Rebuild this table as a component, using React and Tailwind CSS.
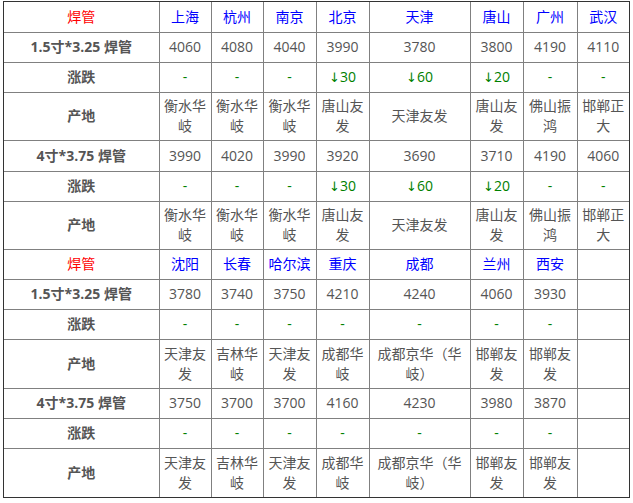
import React from "react";

const cols = ["w-[155px]", "w-[52px]", "w-[52px]", "w-[53px]", "w-[53px]", "w-[101px]", "w-[53px]", "w-[54px]", "w-[52px]"];

const blocks = [
  {
    cities: ["上海", "杭州", "南京", "北京", "天津", "唐山", "广州", "武汉"],
    rows: [
      {
        label: "1.5寸*3.25 焊管",
        prices: ["4060", "4080", "4040", "3990", "3780", "3800", "4190", "4110"],
        change: ["-", "-", "-", "30", "60", "20", "-", "-"],
        origin: ["衡水华岐", "衡水华岐", "衡水华岐", "唐山友发", "天津友发", "唐山友发", "佛山振鸿", "邯郸正大"],
      },
      {
        label: "4寸*3.75 焊管",
        prices: ["3990", "4020", "3990", "3920", "3690", "3710", "4190", "4060"],
        change: ["-", "-", "-", "30", "60", "20", "-", "-"],
        origin: ["衡水华岐", "衡水华岐", "衡水华岐", "唐山友发", "天津友发", "唐山友发", "佛山振鸿", "邯郸正大"],
      },
    ],
    heights: ["h-[30px]", "h-[30px]", "h-[30px]", "h-[48px]", "h-[31px]", "h-[30px]", "h-[48px]"],
  },
  {
    cities: ["沈阳", "长春", "哈尔滨", "重庆", "成都", "兰州", "西安", ""],
    rows: [
      {
        label: "1.5寸*3.25 焊管",
        prices: ["3780", "3740", "3750", "4210", "4240", "4060", "3930", ""],
        change: ["-", "-", "-", "-", "-", "-", "-", ""],
        origin: ["天津友发", "吉林华岐", "天津友发", "成都华岐", "成都京华（华岐）", "邯郸友发", "邯郸友发", ""],
      },
      {
        label: "4寸*3.75 焊管",
        prices: ["3750", "3700", "3700", "4160", "4230", "3980", "3870", ""],
        change: ["-", "-", "-", "-", "-", "-", "-", ""],
        origin: ["天津友发", "吉林华岐", "天津友发", "成都华岐", "成都京华（华岐）", "邯郸友发", "邯郸友发", ""],
      },
    ],
    heights: ["h-[30px]", "h-[30px]", "h-[30px]", "h-[49px]", "h-[30px]", "h-[30px]", "h-[49px]"],
  },
];

const cell = "border border-[#808080] px-1 text-center align-middle";

// 涨跌: "-" stays a dash, numbers get a down arrow
const Change = ({ v }) =>
  v === "-" || v === "" ? (
    v
  ) : (
    <>
      <span className="font-['DejaVu_Sans',sans-serif] text-[13px]">↓</span>
      {v}
    </>
  );

const Block = ({ block }) => {
  const h = block.heights;
  return (
    <>
      <tr className={h[0]}>
        <td className={`${cell} text-[#ff0000]`}>焊管</td>
        {block.cities.map((c, i) => (
          <td key={i} className={`${cell} text-[#0000ff]`}>
            {c}
          </td>
        ))}
      </tr>
      {block.rows.map((r, ri) => (
        <React.Fragment key={ri}>
          <tr className={h[1 + ri * 3]}>
            <td className={`${cell} font-bold text-[#555555]`}>{r.label}</td>
            {r.prices.map((p, i) => (
              <td key={i} className={`${cell} text-[#555555]`}>
                {p}
              </td>
            ))}
          </tr>
          <tr className={h[2 + ri * 3]}>
            <td className={`${cell} font-bold text-[#555555]`}>涨跌</td>
            {r.change.map((p, i) => (
              <td key={i} className={`${cell} text-[#008000]`}>
                <Change v={p} />
              </td>
            ))}
          </tr>
          <tr className={h[3 + ri * 3]}>
            <td className={`${cell} font-bold text-[#555555]`}>产地</td>
            {r.origin.map((p, i) => (
              <td key={i} className={`${cell} text-[#555555]`}>
                {p}
              </td>
            ))}
          </tr>
        </React.Fragment>
      ))}
    </>
  );
};

export default function App() {
  return (
    <div className="bg-white w-[633px] h-[503px] pt-px pl-[3px]">
      <div className="w-[627px] border border-[#333333]">
        <table className="w-full table-fixed border-collapse border-hidden text-[14px] leading-[20px] font-['Open_Sans','Noto_Sans_CJK_SC',sans-serif]">
          <colgroup>
            {cols.map((w, i) => (
              <col key={i} className={w} />
            ))}
          </colgroup>
          <tbody>
            {blocks.map((b, i) => (
              <Block key={i} block={b} />
            ))}
          </tbody>
        </table>
      </div>
    </div>
  );
}
